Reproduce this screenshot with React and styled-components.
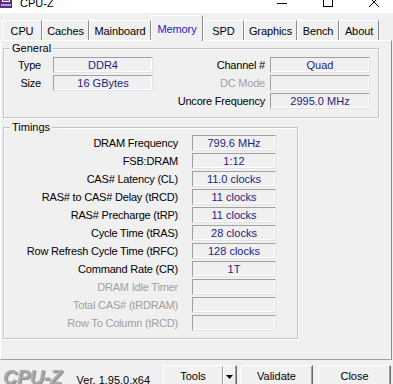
import React from "react";
import styled, { createGlobalStyle } from "styled-components";

const GlobalStyle = createGlobalStyle`
  html, body { margin: 0; padding: 0; background: #f0f0f0; }
  body {
    font-family: "Liberation Sans", Arial, sans-serif;
    font-size: 11px;
    color: #000;
  }
  * { box-sizing: border-box; }
`;

const Window = styled.div`
  width: 393px;
  height: 384px;
  overflow: hidden;
  display: flex;
  flex-direction: column;
  background: #f0f0f0;
`;

const TitleBar = styled.div`
  height: 30px;
  margin-top: -17px;
  flex-shrink: 0;
  background: #fff;
  display: flex;
  align-items: flex-end;
`;

const AppIcon = styled.svg`
  width: 12px;
  height: 14px;
  margin-bottom: 5px;
  flex-shrink: 0;
`;

const TitleText = styled.div`
  font-size: 11px;
  line-height: 13px;
  margin-left: 8px;
  margin-bottom: 3px;
`;

const Controls = styled.div`
  margin-left: auto;
  margin-right: -4px;
  display: flex;
`;

const CtrlButton = styled.div`
  width: 46px;
  height: 30px;
  display: flex;
  align-items: flex-end;
  justify-content: center;
  padding-bottom: 6px;
`;

const TabStrip = styled.div`
  height: 27px;
  flex-shrink: 0;
  display: flex;
  align-items: flex-end;
  padding-left: 2px;
`;

const Tab = styled.div`
  width: ${(p) => p.$w}px;
  height: ${(p) => (p.$active ? 26 : 20)}px;
  margin-bottom: ${(p) => (p.$active ? -1 : 0)}px;
  border-top: 1px solid #fff;
  border-left: 1px solid #fff;
  border-right: 1px solid #8c8c8c;
  display: flex;
  align-items: center;
  justify-content: center;
  color: ${(p) => (p.$active ? "#1a1acd" : "#000")};
  background: #f0f0f0;
  position: relative;
  z-index: ${(p) => (p.$active ? 2 : 1)};
  white-space: nowrap;
  letter-spacing: -0.1px;
`;

const Panel = styled.div`
  height: 320px;
  flex-shrink: 0;
  width: 392px;
  border-top: 1px solid #fff;
  border-left: 1px solid #fff;
  border-right: 1px solid #8c8c8c;
  border-bottom: 1px solid #a0a0a0;
  padding: 7px 0 0 2px;
  display: flex;
  flex-direction: column;
  gap: 9px;
`;

const Group = styled.div`
  position: relative;
  width: ${(p) => p.$w}px;
  border: 1px solid #c4c4c4;
  box-shadow: inset 1px 1px 0 #fff, 1px 1px 0 #fff;
  padding: ${(p) => p.$pad};
`;

const GroupTitle = styled.span`
  position: absolute;
  top: -7px;
  left: 6px;
  padding: 0 2px;
  line-height: 13px;
  background: #f0f0f0;
`;

const GeneralGrid = styled.div`
  display: grid;
  grid-template-columns: 49px 100px 1fr 100px;
  grid-auto-rows: 16px;
  row-gap: 2px;
`;

const Label = styled.div`
  text-align: right;
  line-height: 16px;
  white-space: nowrap;
  padding-right: ${(p) => p.$pr || 0}px;
  margin-right: ${(p) => p.$mr || 0}px;
  color: ${(p) => (p.$disabled ? "#a0a0a0" : "#000")};
  letter-spacing: -0.2px;
`;

const Field = styled.div`
  height: 16px;
  border: 1px solid;
  border-color: #a0a0a0 #e3e3e3 #e3e3e3 #a0a0a0;
  box-shadow: inset -1px -1px 0 #fff;
  text-align: center;
  line-height: 14px;
  color: #1e1e82;
  white-space: nowrap;
`;

const Spacer = styled.div``;

const TimingsGrid = styled.div`
  display: grid;
  grid-template-columns: 174px 84px;
  column-gap: 14px;
  grid-auto-rows: 16px;
  row-gap: 2px;
`;

const Footer = styled.div`
  height: 24px;
  flex-shrink: 0;
  display: flex;
  align-items: flex-start;
  overflow: hidden;
`;

const Logo = styled.div`
  margin: 7px 0 0 3px;
  font-size: 20px;
  line-height: 20px;
  font-weight: bold;
  font-style: italic;
  color: #a9a9a9;
  text-shadow: 1px 1px 0 #8a8a8a;
  letter-spacing: -0.5px;
`;

const Version = styled.div`
  margin: 14px 0 0 15px;
  line-height: 13px;
  white-space: nowrap;
`;

const ButtonRow = styled.div`
  margin: 5px 2px 0 auto;
  display: flex;
`;

const Button = styled.div`
  width: ${(p) => p.$w}px;
  height: 23px;
  margin-left: ${(p) => p.$ml || 0}px;
  border-top: 1px solid #fff;
  border-left: 1px solid #fff;
  border-right: 1px solid #696969;
  border-bottom: 1px solid #696969;
  box-shadow: inset -1px -1px 0 #a0a0a0;
  display: flex;
  align-items: center;
  justify-content: center;
  padding-bottom: 1px;
`;

const SplitButton = styled(Button)`
  justify-content: flex-start;
  padding: 0;
`;

const SplitMain = styled.div`
  width: 58px;
  text-align: center;
  line-height: 21px;
`;

const SplitArrow = styled.div`
  flex: 1;
  height: 100%;
  border-left: 1px solid #a0a0a0;
  box-shadow: inset 1px 0 0 #fff;
  display: flex;
  align-items: center;
  justify-content: center;
`;

const tabs = [
  ["CPU", 40],
  ["Caches", 47],
  ["Mainboard", 62],
  ["Memory", 52],
  ["SPD", 41],
  ["Graphics", 53],
  ["Bench", 42],
  ["About", 40],
];

const timings = [
  ["DRAM Frequency", "799.6 MHz"],
  ["FSB:DRAM", "1:12"],
  ["CAS# Latency (CL)", "11.0 clocks"],
  ["RAS# to CAS# Delay (tRCD)", "11 clocks"],
  ["RAS# Precharge (tRP)", "11 clocks"],
  ["Cycle Time (tRAS)", "28 clocks"],
  ["Row Refresh Cycle Time (tRFC)", "128 clocks"],
  ["Command Rate (CR)", "1T"],
  ["DRAM Idle Timer", "", true],
  ["Total CAS# (tRDRAM)", "", true],
  ["Row To Column (tRCD)", "", true],
];

export default function App() {
  return (
    <>
      <GlobalStyle />
      <Window>
        <TitleBar>
          <AppIcon viewBox="0 0 12 14">
            <rect x="0" y="0" width="12" height="14" fill="#5b2a86" />
            <rect x="2" y="2" width="8" height="6" fill="#fff" />
            <rect x="3" y="3" width="6" height="4" fill="#7a4bb0" />
            <rect x="1" y="10" width="10" height="2" fill="#b89ad6" />
          </AppIcon>
          <TitleText>CPU-Z</TitleText>
          <Controls>
            <CtrlButton>
              <svg width="10" height="10" viewBox="0 0 10 10">
                <line x1="0" y1="6.5" x2="10" y2="6.5" stroke="#000" strokeWidth="1" />
              </svg>
            </CtrlButton>
            <CtrlButton>
              <svg width="10" height="10" viewBox="0 0 10 10">
                <rect x="0.5" y="0.5" width="9" height="9" fill="none" stroke="#000" strokeWidth="1" />
              </svg>
            </CtrlButton>
            <CtrlButton>
              <svg width="10" height="10" viewBox="0 0 10 10">
                <path d="M0 0 L10 10 M10 0 L0 10" stroke="#000" strokeWidth="1" />
              </svg>
            </CtrlButton>
          </Controls>
        </TitleBar>

        <TabStrip>
          {tabs.map(([t, w]) => (
            <Tab key={t} $w={w} $active={t === "Memory"}>
              {t}
            </Tab>
          ))}
        </TabStrip>

        <Panel>
          <Group $w={376} $pad="8px 8px 8px 0">
            <GroupTitle>General</GroupTitle>
            <GeneralGrid>
              <Label $mr={12}>Type</Label>
              <Field>DDR4</Field>
              <Label $pr={5}>Channel #</Label>
              <Field>Quad</Field>
              <Label $mr={12}>Size</Label>
              <Field>16 GBytes</Field>
              <Label $pr={5} $disabled>
                DC Mode
              </Label>
              <Field />
              <Spacer />
              <Spacer />
              <Label $pr={5}>Uncore Frequency</Label>
              <Field>2995.0 MHz</Field>
            </GeneralGrid>
          </Group>

          <Group $w={295} $pad="7px 0 7px 0">
            <GroupTitle>Timings</GroupTitle>
            <TimingsGrid>
              {timings.map(([l, v, d]) => (
                <React.Fragment key={l}>
                  <Label $disabled={d}>{l}</Label>
                  <Field>{v}</Field>
                </React.Fragment>
              ))}
            </TimingsGrid>
          </Group>
        </Panel>

        <Footer>
          <Logo>CPU-Z</Logo>
          <Version>Ver. 1.95.0.x64</Version>
          <ButtonRow>
            <SplitButton $w={74}>
              <SplitMain>Tools</SplitMain>
              <SplitArrow>
                <svg width="7" height="4" viewBox="0 0 7 4">
                  <path d="M0 0 H7 L3.5 4 Z" fill="#000" />
                </svg>
              </SplitArrow>
            </SplitButton>
            <Button $w={73} $ml={3}>
              Validate
            </Button>
            <Button $w={73} $ml={5}>
              Close
            </Button>
          </ButtonRow>
        </Footer>
      </Window>
    </>
  );
}
